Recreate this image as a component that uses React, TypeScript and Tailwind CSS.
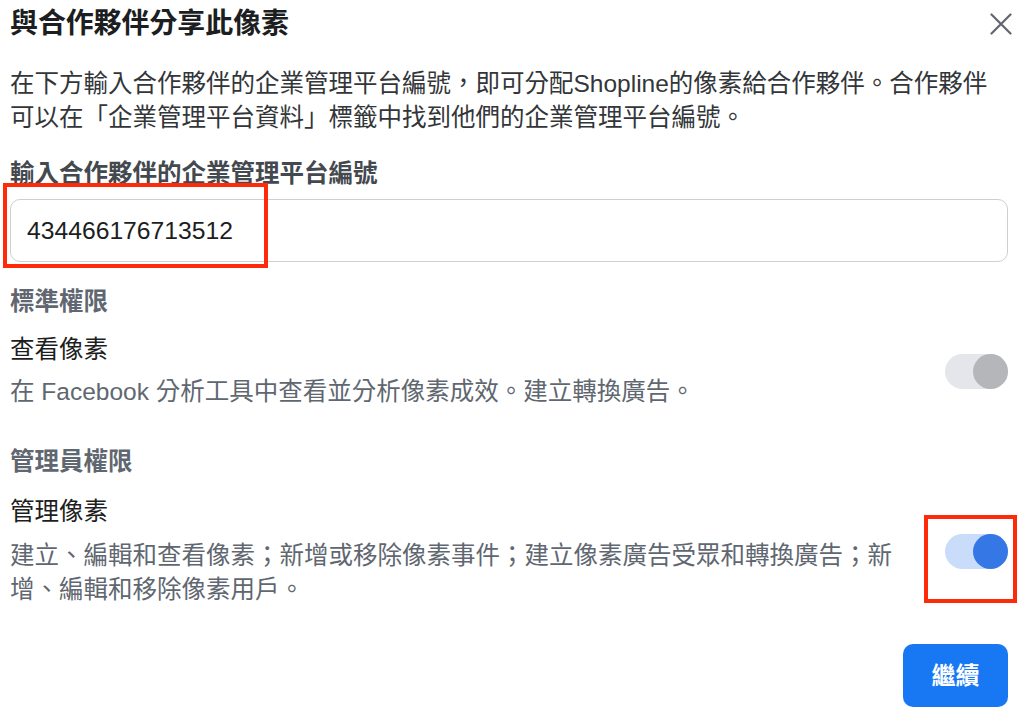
import React from 'react';

const font = { fontFamily: '"Liberation Sans", "Noto Sans CJK TC", sans-serif' };

function Toggle({ on }: { on: boolean }) {
  return (
    <div
      className={`flex h-[35px] w-[63px] shrink-0 items-center justify-end rounded-full ${
        on ? 'bg-[#c9dcfa]' : 'bg-[#e4e6eb]'
      }`}
    >
      <div className={`h-[35px] w-[35px] rounded-full ${on ? 'bg-[#3578e5]' : 'bg-[#b4b6b9]'}`} />
    </div>
  );
}

export default function App() {
  return (
    <div className="relative h-[709px] w-full overflow-hidden bg-white pl-[10px] pr-[16px]" style={font}>
      <div className="flex h-[48px] items-center justify-between">
        <h1 className="text-[27.9px] font-bold leading-[48px] text-[#1c1e21]">與合作夥伴分享此像素</h1>
        <svg width="22" height="22" viewBox="0 0 22 22" className="-mr-[4px]" aria-hidden>
          <path d="M1.5 1.5 L20.5 20.5 M20.5 1.5 L1.5 20.5" stroke="#606770" strokeWidth="2.2" strokeLinecap="round" />
        </svg>
      </div>

      <p className="mt-[19px] text-[24.5px] leading-[34px] text-[#333639]">
        在下方輸入合作夥伴的企業管理平台編號，即可分配Shopline的像素給合作夥伴。合作夥伴
        <br />
        可以在「企業管理平台資料」標籤中找到他們的企業管理平台編號。
      </p>

      <label className="mt-[22px] block text-[24.5px] font-bold leading-[34px] text-[#444950]">
        輸入合作夥伴的企業管理平台編號
      </label>
      <div className="mt-[8px] flex h-[63px] items-center rounded-[10px] border border-[#ccd0d5] px-[16px]">
        <span className="text-[24.7px] text-[#1c1e21]">434466176713512</span>
      </div>

      <div className="mt-[23px] text-[24.5px] font-bold leading-[34px] text-[#606770]">標準權限</div>
      <div className="mt-[14px] flex items-center justify-between">
        <div className="w-[900px]">
          <div className="text-[24.5px] leading-[34px] text-[#1c1e21]">查看像素</div>
          <div className="mt-[8px] text-[24.5px] leading-[34px] text-[#606770]">
            在 Facebook 分析工具中查看並分析像素成效。建立轉換廣告。
          </div>
        </div>
        <Toggle on={false} />
      </div>

      <div className="mt-[36px] text-[24.5px] font-bold leading-[34px] text-[#606770]">管理員權限</div>
      <div className="mt-[16px] flex items-center justify-between">
        <div className="w-[900px]">
          <div className="text-[24.5px] leading-[34px] text-[#1c1e21]">管理像素</div>
          <div className="mt-[10px] text-[24.5px] leading-[34px] text-[#606770]">
            建立、編輯和查看像素；新增或移除像素事件；建立像素廣告受眾和轉換廣告；新
            <br />
            增、編輯和移除像素用戶。
          </div>
        </div>
        <Toggle on />
      </div>

      <div className="mt-[37px] flex justify-end">
        <button className="flex h-[63px] w-[105px] items-center justify-center rounded-[10px] bg-[#1877f2] text-[24px] font-bold text-white">
          繼續
        </button>
      </div>

      <div className="pointer-events-none absolute left-[3px] top-[183px] h-[85px] w-[265px] border-[4px] border-[#fe2a0a]" />
      <div className="pointer-events-none absolute left-[924px] top-[515px] h-[88px] w-[93px] border-[4px] border-[#fe2a0a]" />
    </div>
  );
}
